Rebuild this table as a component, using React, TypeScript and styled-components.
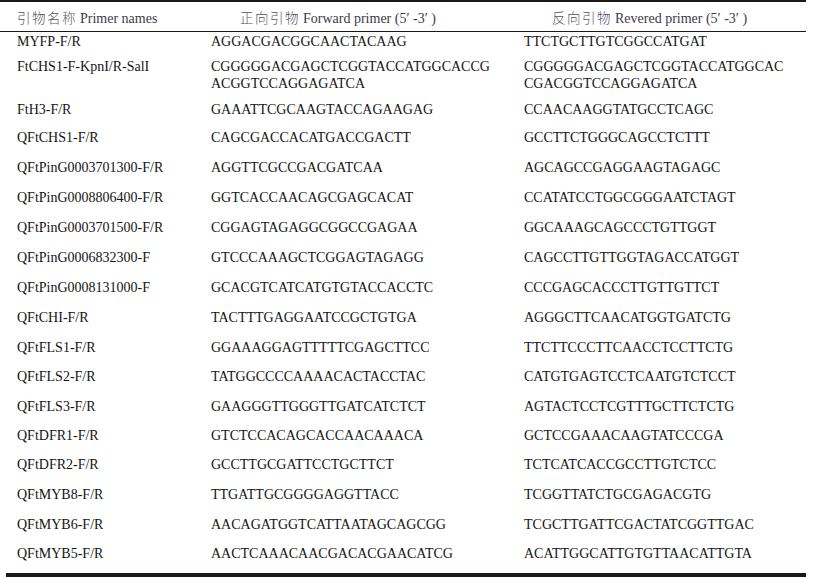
import React from "react";
import styled, { createGlobalStyle } from "styled-components";

const Global = createGlobalStyle`
  html, body { margin: 0; padding: 0; background: #ffffff; }
  body { font-family: "Liberation Serif", "Times New Roman", serif; }
`;

const Table = styled.div`
  width: 806px;
  display: flex;
  flex-direction: column;
`;

const Rule = styled.div<{ $h: number; $indent?: number }>`
  height: ${(p) => p.$h}px;
  margin-left: ${(p) => p.$indent ?? 0}px;
  background: #1d1816;
`;

const HeaderRow = styled.div`
  display: grid;
  grid-template-columns: 211px 313px 1fr;
  height: 29px;
  padding-top: 7px;
  box-sizing: border-box;
  font-size: 14px;
  line-height: 17px;
  color: #3c3a48;
  font-family: "Liberation Serif", "Noto Sans CJK SC", serif;
`;

const HeadCell = styled.div<{ $pad: number }>`
  padding-left: ${(p) => p.$pad}px;
  white-space: nowrap;
`;

const Cjk = styled.span`
  font-family: "Noto Sans CJK SC", sans-serif;
  font-weight: 300;
  font-size: 13.5px;
  letter-spacing: 1.5px;
  color: #55535f;
  margin-right: 3px;
`;

const Row = styled.div<{ $h: number }>`
  display: grid;
  grid-template-columns: 211px 313px 1fr;
  height: ${(p) => p.$h}px;
  padding-top: 1px;
  box-sizing: border-box;
  font-size: 14px;
  line-height: 17px;
  color: #141414;
`;

const Cell = styled.div<{ $pad?: number }>`
  padding-left: ${(p) => p.$pad ?? 0}px;
  white-space: nowrap;
`;

type Primer = { name: string; fwd: string[]; rev: string[]; h: number };

const rows: Primer[] = [
  { name: "MYFP-F/R", fwd: ["AGGACGACGGCAACTACAAG"], rev: ["TTCTGCTTGTCGGCCATGAT"], h: 24.5 },
  {
    name: "FtCHS1-F-KpnI/R-SalI",
    fwd: ["CGGGGGACGAGCTCGGTACCATGGCACCG", "ACGGTCCAGGAGATCA"],
    rev: ["CGGGGGACGAGCTCGGTACCATGGCAC", "CGACGGTCCAGGAGATCA"],
    h: 43,
  },
  { name: "FtH3-F/R", fwd: ["GAAATTCGCAAGTACCAGAAGAG"], rev: ["CCAACAAGGTATGCCTCAGC"], h: 28.5 },
  { name: "QFtCHS1-F/R", fwd: ["CAGCGACCACATGACCGACTT"], rev: ["GCCTTCTGGGCAGCCTCTTT"], h: 30 },
  { name: "QFtPinG0003701300-F/R", fwd: ["AGGTTCGCCGACGATCAA"], rev: ["AGCAGCCGAGGAAGTAGAGC"], h: 30 },
  { name: "QFtPinG0008806400-F/R", fwd: ["GGTCACCAACAGCGAGCACAT"], rev: ["CCATATCCTGGCGGGAATCTAGT"], h: 30 },
  { name: "QFtPinG0003701500-F/R", fwd: ["CGGAGTAGAGGCGGCCGAGAA"], rev: ["GGCAAAGCAGCCCTGTTGGT"], h: 30 },
  { name: "QFtPinG0006832300-F", fwd: ["GTCCCAAAGCTCGGAGTAGAGG"], rev: ["CAGCCTTGTTGGTAGACCATGGT"], h: 30 },
  { name: "QFtPinG0008131000-F", fwd: ["GCACGTCATCATGTGTACCACCTC"], rev: ["CCCGAGCACCCTTGTTGTTCT"], h: 30 },
  { name: "QFtCHI-F/R", fwd: ["TACTTTGAGGAATCCGCTGTGA"], rev: ["AGGGCTTCAACATGGTGATCTG"], h: 29.5 },
  { name: "QFtFLS1-F/R", fwd: ["GGAAAGGAGTTTTTCGAGCTTCC"], rev: ["TTCTTCCCTTCAACCTCCTTCTG"], h: 29.5 },
  { name: "QFtFLS2-F/R", fwd: ["TATGGCCCCAAAACACTACCTAC"], rev: ["CATGTGAGTCCTCAATGTCTCCT"], h: 29.5 },
  { name: "QFtFLS3-F/R", fwd: ["GAAGGGTTGGGTTGATCATCTCT"], rev: ["AGTACTCCTCGTTTGCTTCTCTG"], h: 29 },
  { name: "QFtDFR1-F/R", fwd: ["GTCTCCACAGCACCAACAAACA"], rev: ["GCTCCGAAACAAGTATCCCGA"], h: 29 },
  { name: "QFtDFR2-F/R", fwd: ["GCCTTGCGATTCCTGCTTCT"], rev: ["TCTCATCACCGCCTTGTCTCC"], h: 30 },
  { name: "QFtMYB8-F/R", fwd: ["TTGATTGCGGGGAGGTTACC"], rev: ["TCGGTTATCTGCGAGACGTG"], h: 30 },
  { name: "QFtMYB6-F/R", fwd: ["AACAGATGGTCATTAATAGCAGCGG"], rev: ["TCGCTTGATTCGACTATCGGTTGAC"], h: 29.5 },
  { name: "QFtMYB5-F/R", fwd: ["AACTCAAACAACGACACGAACATCG"], rev: ["ACATTGGCATTGTGTTAACATTGTA"], h: 28.7 },
];

const Lines = ({ lines }: { lines: string[] }) => (
  <>
    {lines.map((l, i) => (
      <div key={i}>{l}</div>
    ))}
  </>
);

export default function App() {
  return (
    <>
      <Global />
      <Table>
        <Rule $h={2} />
        <HeaderRow>
          <HeadCell $pad={17}>
            <Cjk>引物名称</Cjk>Primer names
          </HeadCell>
          <HeadCell $pad={29}>
            <Cjk>正向引物</Cjk>Forward primer (5′ -3′ )
          </HeadCell>
          <HeadCell $pad={28}>
            <Cjk>反向引物</Cjk>Revered primer (5′ -3′ )
          </HeadCell>
        </HeaderRow>
        <Rule $h={1} />
        {rows.map((r) => (
          <Row key={r.name} $h={r.h}>
            <Cell $pad={17}>{r.name}</Cell>
            <Cell>
              <Lines lines={r.fwd} />
            </Cell>
            <Cell>
              <Lines lines={r.rev} />
            </Cell>
          </Row>
        ))}
        <Rule $h={4} $indent={6} />
      </Table>
    </>
  );
}
